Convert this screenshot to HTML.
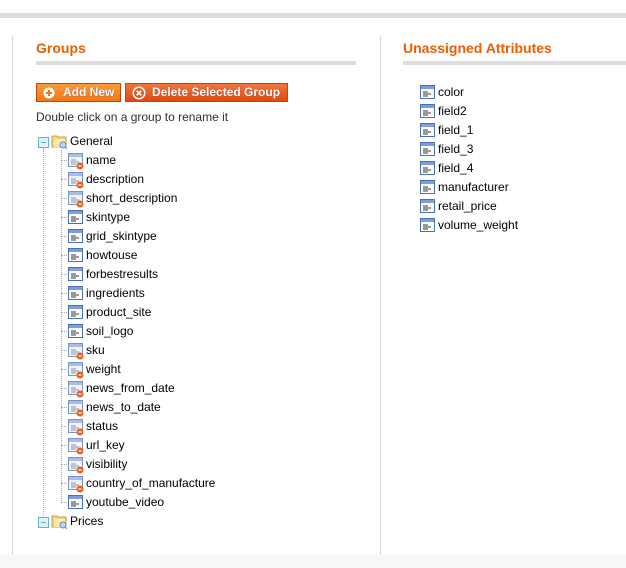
<!DOCTYPE html>
<html><head><meta charset="utf-8"><style>
*{margin:0;padding:0;box-sizing:border-box}
body{width:626px;height:568px;background:#fff;position:relative;overflow:hidden;font-family:"Liberation Sans",Arial,sans-serif;font-size:12px;color:#2f2f2f}
.abs{position:absolute}
.h{color:#eb5e00;font-weight:bold;font-size:14px}
.bar{background:#dedede;height:4px}
.btn{position:absolute;top:83px;height:19px;color:#fff;font-weight:bold;font-size:12px;line-height:17px;text-shadow:0 0 1px #a33;border:1px solid #c14a00}
.row{position:absolute;height:19px;line-height:19px;font-size:12px;color:#000;white-space:nowrap}
.row svg{position:absolute;left:0;top:2px}
.row span{position:absolute;left:18px;top:0}
.dv{position:absolute;border-left:1px dotted #aaa}
.dh{position:absolute;border-top:1px dotted #aaa;width:12px}
</style></head><body>
<div class="abs" style="left:0;top:13px;width:626px;height:5px;background:#dedede"></div>
<div class="abs" style="left:12px;top:36px;width:1px;height:519px;background:#d6d6d6"></div>
<div class="abs" style="left:380px;top:36px;width:1px;height:519px;background:#d6d6d6"></div>
<div class="abs" style="left:0;top:555px;width:626px;height:13px;background:#f8f8f8"></div>

<div class="abs h" style="left:36px;top:40px">Groups</div>
<div class="abs bar" style="left:36px;top:61px;width:320px"></div>
<div class="abs h" style="left:403px;top:40px">Unassigned Attributes</div>
<div class="abs bar" style="left:403px;top:61px;width:223px"></div>

<div class="btn" style="left:36px;width:85px;background:linear-gradient(#f99a3a,#f07818)">
<svg class="abs" style="left:6px;top:3px" width="12" height="12"><circle cx="6" cy="6" r="5.5" fill="#fff"/><path d="M6 3v6M3 6h6" stroke="#f07818" stroke-width="2"/></svg>
<span class="abs" style="left:26px">Add New</span></div>
<div class="btn" style="left:125px;width:163px;background:linear-gradient(#f0763a,#dc4a12)">
<svg class="abs" style="left:6px;top:2px" width="14" height="14"><circle cx="7" cy="7" r="6.5" fill="#fff"/><circle cx="7" cy="7" r="5" fill="#e0551f"/><path d="M4.7 4.7l4.6 4.6M9.3 4.7l-4.6 4.6" stroke="#fff" stroke-width="1.8"/></svg>
<span class="abs" style="left:26px">Delete Selected Group</span></div>

<div class="abs" style="left:36px;top:110px;font-size:12px;color:#2f2f2f">Double click on a group to rename it</div>

<div class="dv" style="left:43px;top:148px;height:380px"></div>
<div class="dv" style="left:61px;top:150px;height:353px"></div>

<svg width="0" height="0" style="position:absolute"><defs>
<g id="fold"><path d="M1 3h5l1 1h8v10H1z" fill="#f3d77a" stroke="#c9a23e"/><path d="M3 6h11v8H3z" fill="#fbeab0"/><circle cx="12" cy="12" r="3" fill="#bcd6f0" stroke="#6a8fc0"/><path d="M14 14l2 2" stroke="#6a8fc0"/></g>
<g id="ic"><rect x="0.5" y="0.5" width="14" height="13" fill="#fff" stroke="#4c6fb5"/><rect x="1" y="1" width="13" height="3" fill="#7c9ee0"/><path d="M3 7h5M3 9h8M3 11h5" stroke="#333"/></g>
<g id="ics"><rect x="0.5" y="0.5" width="14" height="13" fill="#f2f4fa" stroke="#7c93c6"/><rect x="1" y="1" width="13" height="3" fill="#a9bde6"/><path d="M3 7h5M3 9h8M3 11h5" stroke="#8892a8"/><circle cx="12" cy="13" r="3.5" fill="#e8601c"/><path d="M10.3 13h3.4" stroke="#fff" stroke-width="1.2"/></g>
</defs></svg>

<div class="row" style="left:38px;top:132px">
<svg width="12" height="12" style="top:5px"><rect x="0.5" y="0.5" width="10" height="10" fill="#dff1f6" stroke="#5bb8c9"/><path d="M3 5.5h5" stroke="#5bb8c9"/></svg>
<svg width="17" height="17" style="left:13px;top:1px"><use href="#fold"/></svg>
<span style="left:32px">General</span></div>

<div class="row" style="left:38px;top:512px">
<svg width="12" height="12" style="top:5px"><rect x="0.5" y="0.5" width="10" height="10" fill="#dff1f6" stroke="#5bb8c9"/><path d="M3 5.5h5" stroke="#5bb8c9"/></svg>
<svg width="17" height="17" style="left:13px;top:1px"><use href="#fold"/></svg>
<span style="left:32px">Prices</span></div>

<div id="tree"></div>
<script></script>

<div class="dh" style="left:61px;top:160px"></div>
<div class="row" style="left:68px;top:151px"><svg width="17" height="17"><use href="#ics"/></svg><span>name</span></div>
<div class="dh" style="left:61px;top:179px"></div>
<div class="row" style="left:68px;top:170px"><svg width="17" height="17"><use href="#ics"/></svg><span>description</span></div>
<div class="dh" style="left:61px;top:198px"></div>
<div class="row" style="left:68px;top:189px"><svg width="17" height="17"><use href="#ics"/></svg><span>short_description</span></div>
<div class="dh" style="left:61px;top:217px"></div>
<div class="row" style="left:68px;top:208px"><svg width="17" height="17"><use href="#ic"/></svg><span>skintype</span></div>
<div class="dh" style="left:61px;top:236px"></div>
<div class="row" style="left:68px;top:227px"><svg width="17" height="17"><use href="#ic"/></svg><span>grid_skintype</span></div>
<div class="dh" style="left:61px;top:255px"></div>
<div class="row" style="left:68px;top:246px"><svg width="17" height="17"><use href="#ic"/></svg><span>howtouse</span></div>
<div class="dh" style="left:61px;top:274px"></div>
<div class="row" style="left:68px;top:265px"><svg width="17" height="17"><use href="#ic"/></svg><span>forbestresults</span></div>
<div class="dh" style="left:61px;top:293px"></div>
<div class="row" style="left:68px;top:284px"><svg width="17" height="17"><use href="#ic"/></svg><span>ingredients</span></div>
<div class="dh" style="left:61px;top:312px"></div>
<div class="row" style="left:68px;top:303px"><svg width="17" height="17"><use href="#ic"/></svg><span>product_site</span></div>
<div class="dh" style="left:61px;top:331px"></div>
<div class="row" style="left:68px;top:322px"><svg width="17" height="17"><use href="#ic"/></svg><span>soil_logo</span></div>
<div class="dh" style="left:61px;top:350px"></div>
<div class="row" style="left:68px;top:341px"><svg width="17" height="17"><use href="#ics"/></svg><span>sku</span></div>
<div class="dh" style="left:61px;top:369px"></div>
<div class="row" style="left:68px;top:360px"><svg width="17" height="17"><use href="#ics"/></svg><span>weight</span></div>
<div class="dh" style="left:61px;top:388px"></div>
<div class="row" style="left:68px;top:379px"><svg width="17" height="17"><use href="#ics"/></svg><span>news_from_date</span></div>
<div class="dh" style="left:61px;top:407px"></div>
<div class="row" style="left:68px;top:398px"><svg width="17" height="17"><use href="#ics"/></svg><span>news_to_date</span></div>
<div class="dh" style="left:61px;top:426px"></div>
<div class="row" style="left:68px;top:417px"><svg width="17" height="17"><use href="#ics"/></svg><span>status</span></div>
<div class="dh" style="left:61px;top:445px"></div>
<div class="row" style="left:68px;top:436px"><svg width="17" height="17"><use href="#ics"/></svg><span>url_key</span></div>
<div class="dh" style="left:61px;top:464px"></div>
<div class="row" style="left:68px;top:455px"><svg width="17" height="17"><use href="#ics"/></svg><span>visibility</span></div>
<div class="dh" style="left:61px;top:483px"></div>
<div class="row" style="left:68px;top:474px"><svg width="17" height="17"><use href="#ics"/></svg><span>country_of_manufacture</span></div>
<div class="dh" style="left:61px;top:502px"></div>
<div class="row" style="left:68px;top:493px"><svg width="17" height="17"><use href="#ic"/></svg><span>youtube_video</span></div>

<div class="row" style="left:420px;top:83px"><svg width="17" height="17"><use href="#ic"/></svg><span>color</span></div>
<div class="row" style="left:420px;top:102px"><svg width="17" height="17"><use href="#ic"/></svg><span>field2</span></div>
<div class="row" style="left:420px;top:121px"><svg width="17" height="17"><use href="#ic"/></svg><span>field_1</span></div>
<div class="row" style="left:420px;top:140px"><svg width="17" height="17"><use href="#ic"/></svg><span>field_3</span></div>
<div class="row" style="left:420px;top:159px"><svg width="17" height="17"><use href="#ic"/></svg><span>field_4</span></div>
<div class="row" style="left:420px;top:178px"><svg width="17" height="17"><use href="#ic"/></svg><span>manufacturer</span></div>
<div class="row" style="left:420px;top:197px"><svg width="17" height="17"><use href="#ic"/></svg><span>retail_price</span></div>
<div class="row" style="left:420px;top:216px"><svg width="17" height="17"><use href="#ic"/></svg><span>volume_weight</span></div>
</body></html>
